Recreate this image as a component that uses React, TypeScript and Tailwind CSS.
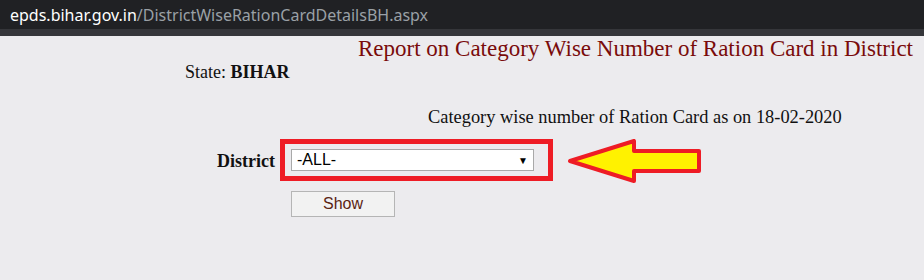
export default function App() {
  return (
    <div className="h-[280px] w-[924px] overflow-hidden bg-[#ecebee] flex flex-col">
      {/* browser address bar */}
      <div className="h-[29px] bg-[#202124] pl-[10px] flex items-center text-[16px] font-['Noto_Sans',sans-serif] leading-none">
        <span className="text-white">epds.bihar.gov.in</span>
        <span className="text-[#9aa0a6]">/DistrictWiseRationCardDetailsBH.aspx</span>
      </div>
      <div className="h-[7px] bg-[#35363a]" />

      {/* page content */}
      <div className="flex flex-col font-['Liberation_Serif',serif] text-[#111]">
        <h1 className="text-right pr-[11px] text-[23px] leading-[26px] text-[#7a0b0b]">
          Report on Category Wise Number of Ration Card in District
        </h1>
        <div className="pl-[185px] text-[18px] leading-[20px]">
          State: <b>BIHAR</b>
        </div>
        <div className="pl-[428px] text-[18.4px] leading-[20px] mt-[25px]">
          Category wise number of Ration Card as on 18-02-2020
        </div>

        <div className="flex items-center h-[42px] mt-[12px] pl-[217px]">
          <span className="font-bold text-[18px] w-[63px] mt-[2px]">District</span>
          <div className="w-[273px] h-[42px] border-[5px] border-[#ee1c25] flex items-center pl-[6px]">
            <div className="w-[243px] h-[22px] bg-white border border-[#a9a9a9] flex items-center justify-between px-[5px] font-['Liberation_Sans',sans-serif] text-[16px] text-black">
              <span>-ALL-</span>
              <span className="text-[10px]">▼</span>
            </div>
          </div>
          <svg width="136" height="48" viewBox="0 0 136 48" className="ml-[14px] mt-[6px] shrink-0">
            <polygon
              points="3,22 67,2 67,12 132,12 132,32 67,32 67,42"
              fill="#fff200"
              stroke="#ee1c25"
              strokeWidth="4"
              strokeLinejoin="round"
            />
          </svg>
        </div>

        <div className="pl-[291px] mt-[10px]">
          <button className="w-[104px] h-[26px] bg-[#f2f2f2] border border-[#b5b5b5] font-['Liberation_Sans',sans-serif] text-[16px] text-[#5b2414]">
            Show
          </button>
        </div>
      </div>
    </div>
  )
}
